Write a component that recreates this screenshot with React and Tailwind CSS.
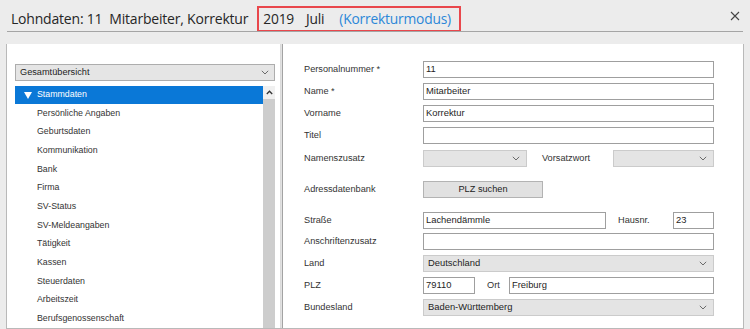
import React from 'react';

const Chevron = ({ className = '' }) => (
  <svg width="8" height="5" viewBox="0 0 8 5" className={className}>
    <polyline points="0.8,0.8 4,4 7.2,0.8" fill="none" stroke="#6b6b6b" strokeWidth="1" />
  </svg>
);

const Input = ({ value = '', className = '' }) => (
  <div className={`h-[17px] border border-[#9f9f9f] bg-white flex items-center pl-[2px] text-[9.4px] text-[#1e1e1e] ${className}`}>
    {value}
  </div>
);

const Select = ({ value = '', className = '' }) => (
  <div className={`h-[17px] border border-[#cbcbcb] bg-[#e4e4e4] flex items-center pl-[4px] pr-[6px] text-[9.4px] text-[#1e1e1e] ${className}`}>
    <span className="flex-1">{value}</span>
    <Chevron />
  </div>
);

const Row = ({ label, mt, children }) => (
  <div className={`flex items-center h-[17px] ${mt}`}>
    <div className="w-[119px] text-[9.2px] text-[#333]">{label}</div>
    {children}
  </div>
);

const tree = [
  'Persönliche Angaben', 'Geburtsdaten', 'Kommunikation', 'Bank', 'Firma', 'SV-Status',
  'SV-Meldeangaben', 'Tätigkeit', 'Kassen', 'Steuerdaten', 'Arbeitszeit', 'Berufsgenossenschaft',
];

export default function App() {
  return (
    <div className="w-[750px] h-[329px] bg-[#ececec] overflow-hidden font-['Liberation_Sans',Arial,sans-serif]">
      {/* title */}
      <div className="mx-[7px] h-[32px] border-b border-[#a5a5a5] flex relative">
        <div className="self-center pl-[4px] pt-[6px] text-[14px] text-[#262626] font-['Open_Sans','Liberation_Sans',sans-serif] tracking-[-0.2px]">
          Lohndaten: 11&nbsp; Mitarbeiter, Korrektur
        </div>
        <div className="self-end ml-[9px] h-[25px] w-[204px] border-2 border-b-[1.5px] border-[#e9474c] flex items-center pl-[4px] pt-[1px] text-[13.8px] font-['Open_Sans','Liberation_Sans',sans-serif] tracking-[-0.2px] whitespace-nowrap">
          <span className="text-[#262626]">2019</span>
          <span className="ml-[12px] text-[#262626]">Juli</span>
          <span className="ml-[15px] text-[#2b87d8]">(Korrekturmodus)</span>
        </div>
        <div className="absolute right-[3px] top-[11px] text-[#444]">
          <svg width="10" height="10" viewBox="0 0 10 10">
            <path d="M1 1 L9 9 M9 1 L1 9" stroke="#444" strokeWidth="1.1" />
          </svg>
        </div>
      </div>
      <div className="h-[12px]" />

      {/* body */}
      <div className="mx-[6px] h-[285px] border-x border-b border-[#b9b9b9] bg-white flex">
        {/* left */}
        <div className="w-[274px] border-r border-[#dadada] pt-[20px] pl-[8px] pr-[5px] flex flex-col">
          <div className="h-[17px] border border-[#adadad] bg-[#e5e5e5] flex items-center pl-[4px] pr-[5px] text-[9.2px] text-[#222]">
            <span className="flex-1">Gesamtübersicht</span>
            <Chevron />
          </div>
          <div className="mt-[5px] flex flex-1">
            <div className="flex-1">
              <div className="h-[18px] bg-[#0a78d7] flex items-center text-white text-[8.8px]">
                <svg width="8" height="7" viewBox="0 0 8 7" className="ml-[9px] mr-[5px]">
                  <polygon points="0,0 8,0 4,7" fill="#fff" />
                </svg>
                Stammdaten
              </div>
              {tree.map((t) => (
                <div key={t} className="h-[18.67px] flex items-center pl-[22px] text-[8.8px] text-[#333]">
                  {t}
                </div>
              ))}
            </div>
            <div className="w-[12px] flex flex-col bg-[#cdcdcd]">
              <div className="h-[13px] bg-[#f0f0f0] flex items-center justify-center">
                <svg width="7" height="5" viewBox="0 0 7 5">
                  <polyline points="0.8,4 3.5,1.2 6.2,4" fill="none" stroke="#333" strokeWidth="1.3" />
                </svg>
              </div>
            </div>
          </div>
        </div>
        <div className="w-[2px] border-l border-[#e2e2e2] bg-[#a3a3a3]" />

        {/* right */}
        <div className="flex-1 pt-[17px] pl-[21px] flex flex-col">
          <Row label="Personalnummer *" mt="">
            <Input value="11" className="w-[291px]" />
          </Row>
          <Row label="Name *" mt="mt-[5px]">
            <Input value="Mitarbeiter" className="w-[291px]" />
          </Row>
          <Row label="Vorname" mt="mt-[5px]">
            <Input value="Korrektur" className="w-[291px]" />
          </Row>
          <Row label="Titel" mt="mt-[5px]">
            <Input className="w-[291px]" />
          </Row>
          <Row label="Namenszusatz" mt="mt-[6px]">
            <Select className="w-[104px]" />
            <div className="ml-[15px] w-[71px] text-[9.2px] text-[#333]">Vorsatzwort</div>
            <Select className="w-[101px]" />
          </Row>
          <Row label="Adressdatenbank" mt="mt-[14px]">
            <div className="h-[17px] w-[120px] border border-[#b3b3b3] bg-[#e1e1e1] flex items-center justify-center text-[9.2px] text-[#222]">
              PLZ suchen
            </div>
          </Row>
          <Row label="Straße" mt="mt-[14px]">
            <Input value="Lachendämmle" className="w-[183px]" />
            <div className="ml-[12px] w-[55px] text-[9.2px] text-[#333]">Hausnr.</div>
            <Input value="23" className="w-[41px]" />
          </Row>
          <Row label="Anschriftenzusatz" mt="mt-[4px]">
            <Input className="w-[291px]" />
          </Row>
          <Row label="Land" mt="mt-[5px]">
            <Select value="Deutschland" className="w-[291px]" />
          </Row>
          <Row label="PLZ" mt="mt-[5px]">
            <Input value="79110" className="w-[52px]" />
            <div className="ml-[12px] w-[22px] text-[9.2px] text-[#333]">Ort</div>
            <Input value="Freiburg" className="w-[205px]" />
          </Row>
          <Row label="Bundesland" mt="mt-[5px]">
            <Select value="Baden-Württemberg" className="w-[291px]" />
          </Row>
        </div>
      </div>
    </div>
  );
}
